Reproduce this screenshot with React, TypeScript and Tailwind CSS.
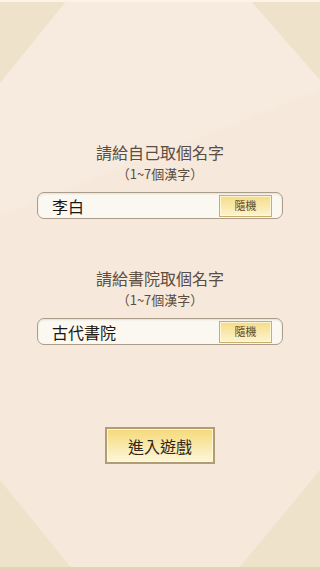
import { useState } from "react";

const font = { fontFamily: '"Noto Sans CJK TC", "Noto Sans", sans-serif' };

function Backdrop() {
  return (
    <svg
      className="absolute inset-0 h-full w-full"
      viewBox="0 0 320 569"
      preserveAspectRatio="none"
    >
      <rect width="320" height="569" fill="#f7ebdf" />
      <polygon points="0,215 320,90 320,569 0,569" fill="#f6e9dc" />
      <polygon points="0,0 67,0 0,83" fill="#efe2ca" />
      <polygon points="250,0 320,0 320,80" fill="#efe2ca" />
      <polygon points="0,480 72,569 0,569" fill="#efe2ca" />
      <polygon points="320,470 320,569 238,569" fill="#efe2ca" />
      <rect x="0" y="0" width="320" height="2" fill="#fbf3e6" />
      <rect x="0" y="567" width="320" height="2" fill="#e3d3b4" />
    </svg>
  );
}

function NameField({
  title,
  value,
  onChange,
}: {
  title: string;
  value: string;
  onChange: (v: string) => void;
}) {
  return (
    <div className="flex flex-col items-center">
      <p className="text-[16px] leading-[22px] text-[#5a4e42]">{title}</p>
      <p className="mt-[3px] text-[13px] leading-[16px] text-[#5a4e42]">（1~7個漢字）</p>
      <div className="mt-[10px] flex h-[27px] w-[246px] items-center rounded-[7px] border border-[#ab9d8a] bg-[#fbf8f1] pl-[14px] pr-[10px] shadow-[inset_0_1px_2px_rgba(0,0,0,0.1)]">
        <input
          className="min-w-0 flex-1 bg-transparent text-[16px] leading-[20px] text-[#1a1612] outline-none"
          style={font}
          value={value}
          onChange={(e) => onChange(e.target.value)}
        />
        <button
          className="flex h-[22px] w-[53px] items-center justify-center border border-[#c8ad6e] bg-gradient-to-b from-[#f6dc86] to-[#fdf4cf] text-[11px] leading-none text-[#5b4a2c] shadow-[inset_0_0_0_1px_rgba(255,250,225,0.8)]"
          style={font}
        >
          隨機
        </button>
      </div>
    </div>
  );
}

export default function App() {
  const [player, setPlayer] = useState("李白");
  const [academy, setAcademy] = useState("古代書院");

  return (
    <div className="relative h-[569px] w-[320px] overflow-hidden" style={font}>
      <Backdrop />
      <div className="relative flex flex-col items-center pt-[141px]">
        <NameField title="請給自己取個名字" value={player} onChange={setPlayer} />
        <div className="mt-[48px]">
          <NameField title="請給書院取個名字" value={academy} onChange={setAcademy} />
        </div>
        <button className="mt-[82px] flex h-[37px] w-[110px] items-center justify-center border-2 border-[#b29c76] bg-gradient-to-b from-[#f5d978] via-[#f9e8a8] to-[#fdf6dc] text-[16px] text-[#2e2618] shadow-[inset_0_0_0_1px_rgba(255,248,220,0.9)]">
          進入遊戲
        </button>
      </div>
    </div>
  );
}
